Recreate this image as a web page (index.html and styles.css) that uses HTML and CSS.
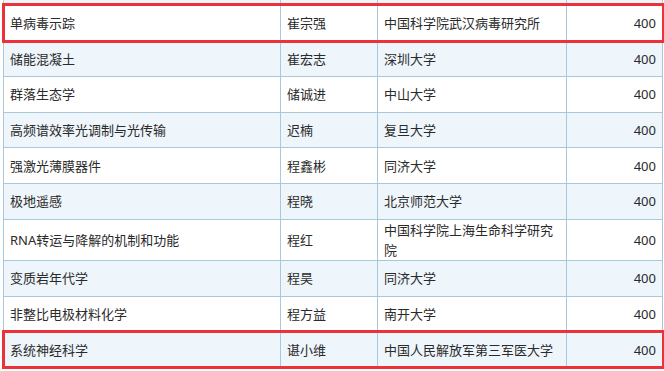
FILE: index.html
```html
<!DOCTYPE html>
<html lang="zh-CN">
<head>
<meta charset="utf-8">
<link rel="stylesheet" href="styles.css">
</head>
<body>
<div class="viewport">
<table class="grid">
  <colgroup>
    <col class="c-topic"><col class="c-name"><col class="c-org"><col class="c-amt">
  </colgroup>
  <tbody>
    <tr class="alt cut"><td></td><td></td><td></td><td class="num"></td></tr>
    <tr class="mark"><td>单病毒示踪</td><td>崔宗强</td><td>中国科学院武汉病毒研究所</td><td class="num">400</td></tr>
    <tr class="alt"><td>储能混凝土</td><td>崔宏志</td><td>深圳大学</td><td class="num">400</td></tr>
    <tr><td>群落生态学</td><td>储诚进</td><td>中山大学</td><td class="num">400</td></tr>
    <tr class="alt"><td>高频谱效率光调制与光传输</td><td>迟楠</td><td>复旦大学</td><td class="num">400</td></tr>
    <tr><td>强激光薄膜器件</td><td>程鑫彬</td><td>同济大学</td><td class="num">400</td></tr>
    <tr class="alt"><td>极地遥感</td><td>程晓</td><td>北京师范大学</td><td class="num">400</td></tr>
    <tr class="tall"><td>RNA转运与降解的机制和功能</td><td>程红</td><td>中国科学院上海生命科学研究院</td><td class="num">400</td></tr>
    <tr class="alt"><td>变质岩年代学</td><td>程昊</td><td>同济大学</td><td class="num">400</td></tr>
    <tr><td>非整比电极材料化学</td><td>程方益</td><td>南开大学</td><td class="num">400</td></tr>
    <tr class="alt mark"><td>系统神经科学</td><td>谌小维</td><td>中国人民解放军第三军医大学</td><td class="num">400</td></tr>
  </tbody>
</table>
</div>
</body>
</html>
```

FILE: styles.css
```css
html, body {
  margin: 0;
  padding: 0;
  background: #ffffff;
}

.viewport {
  width: 664px;
  height: 371px;
  overflow: hidden;
}

.grid {
  margin: -31px 0 0 3px;
  width: 659px;
  table-layout: fixed;
  border-collapse: collapse;
  font-family: "Noto Sans", "Noto Sans CJK SC", sans-serif;
  font-size: 13px;
  line-height: 20px;
  color: #2a2a2a;
}

.c-topic { width: 277px; }
.c-name { width: 97px; }
.c-org { width: 189px; }
.c-amt { width: 96px; }

.grid tr {
  height: 35.7px;
  background: #ffffff;
}

.grid tr.alt {
  background: #eef5fb;
}

.grid td {
  border: 1px solid #a9c8da;
  padding: 0 5px 0 6px;
  vertical-align: middle;
  white-space: normal;
}

.grid td.num {
  text-align: right;
  padding-right: 6px;
}

.grid tr.mark {
  outline: 3px solid #ec3238;
  outline-offset: -1px;
}
```
